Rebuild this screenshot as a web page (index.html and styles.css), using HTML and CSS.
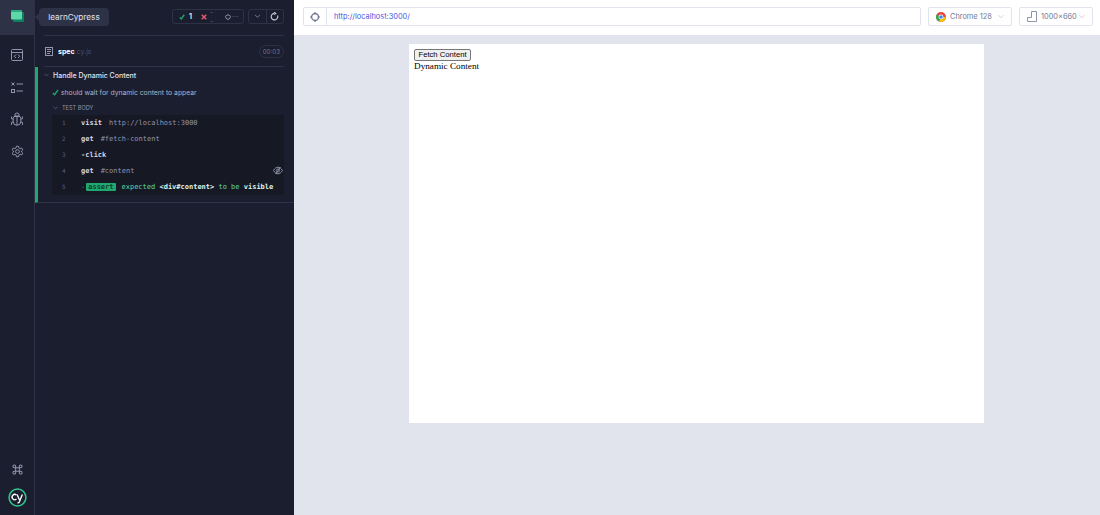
FILE: index.html
```html
<!DOCTYPE html>
<html lang="en">
<head>
<meta charset="utf-8">
<title>learnCypress</title>
<link rel="stylesheet" href="styles.css">
</head>
<body>
<div class="app">
  <nav class="nav">
    <div class="nav-active">
      <svg width="13" height="12" viewBox="0 0 13 12"><rect x="2" y="2" width="11" height="10" rx="1" fill="#0f7f63"/><rect x="0" y="0" width="11" height="9.500" rx="1" fill="#5fd8a8"/><rect x="0" y="0" width="11" height="2" fill="#2fa97f"/></svg>
    </div>
    <div class="tip">learnCypress</div>
    <ul class="nav-list">
      <li><svg width="12" height="12" viewBox="0 0 12 12" fill="none" stroke="#9095ad"><rect x=".5" y=".5" width="11" height="11" rx="1"/><path d="M.5 3.500h11M5 5.500L3.300 7.300 5 9M7 5.500l1.700 1.800L7 9"/></svg></li>
      <li><svg width="12" height="11" viewBox="0 0 12 11" fill="none" stroke="#9095ad"><path d="M.5.500l3 3M3.500.500l-3 3M5.500 2h6.500M5.500 9h6.500"/><rect x=".5" y="7.500" width="3" height="3"/></svg></li>
      <li><svg width="12" height="14" viewBox="0 0 12 14" fill="none" stroke="#9095ad"><path d="M4 3a2 2 0 0 1 4 0v1H4zM3 4.500h6l.8 2v3a3.800 3.800 0 0 1-7.600 0v-3zM6 4.500V13M2.200 7H.8L.3 4.500M9.800 7h1.400l.5-2.500M2.200 10H.8l-.5 3M9.800 10h1.400l.5 3"/></svg></li>
      <li><svg width="13" height="13" viewBox="0 0 16 16" fill="none" stroke="#9095ad" stroke-width="1.200"><path d="M6.700 1.500h2.600l.4 2 1.600.9 1.900-.7 1.300 2.300-1.500 1.300v1.400l1.500 1.300-1.300 2.300-1.900-.7-1.600.9-.4 2H6.700l-.4-2-1.600-.9-1.900.7L1.500 10l1.500-1.300V7.300L1.500 6l1.300-2.300 1.900.7 1.600-.9z"/><circle cx="8" cy="8" r="2.300"/></svg></li>
    </ul>
    <div class="nav-bottom">
      <svg width="11" height="11" viewBox="0 0 12 12" fill="none" stroke="#9095ad" stroke-width="1.100"><path d="M4 4h4v4H4zM4 4H2.500A1.500 1.500 0 1 1 4 2.500zM8 4V2.500A1.500 1.500 0 1 1 9.500 4zM8 8h1.500A1.500 1.500 0 1 1 8 9.500zM4 8v1.500A1.500 1.500 0 1 1 2.500 8z"/></svg>
      <svg width="19" height="19" viewBox="0 0 18 18" fill="none"><circle cx="9" cy="9" r="8" stroke="#2fc98f" stroke-width="1.400"/><path d="M8 6.700a2.500 2.500 0 1 0 0 3.800" stroke="#fff" stroke-width="1.300"/><path d="M8.600 6.200l2.200 5M13.600 6.200l-2.800 6.900c-.4.800-1 1.100-1.800 1" stroke="#fff" stroke-width="1.300"/></svg>
    </div>
  </nav>

  <section class="reporter">
    <header class="controls">
      <div class="stats">
        <svg width="6" height="6" viewBox="0 0 8 8" fill="none" stroke="#1fa971" stroke-width="1.800"><path d="M1 4.500l2 2L7 1"/></svg>
        <span class="num">1</span>
        <svg class="x" width="6" height="6" viewBox="0 0 8 8" fill="none" stroke="#e45770" stroke-width="2"><path d="M1 1l6 6M7 1L1 7"/></svg>
        <span class="dash d1">--</span>
        <svg class="o" width="6" height="6" viewBox="0 0 9 9" fill="none" stroke="#9095ad" stroke-width="1.500"><path d="M2.800 1.300a3.500 3.500 0 1 0 3.400 0M4.500 0v3"/></svg>
        <span class="dash d2">--</span>
      </div>
      <div class="btns">
        <span class="btn"><svg width="7" height="5" viewBox="0 0 8 6" fill="none" stroke="#747994" stroke-width="1.200"><path d="M1 1l3 3 3-3"/></svg></span>
        <span class="btn"><svg width="9" height="9" viewBox="0 0 11 11" fill="none" stroke="#c9cbd8" stroke-width="1.400"><path d="M5 1.700a4 4 0 1 0 4.200 2.500M5 .2l2 1.500-2 1.500"/></svg></span>
      </div>
    </header>
    <div class="spec">
      <svg width="8" height="9" viewBox="0 0 8 9" fill="none" stroke="#9095ad"><rect x=".5" y=".5" width="7" height="8"/><path d="M2 2.500h4M2 4.500h4M2 6.500h3"/></svg>
      <span class="spec-name">spec</span><span class="spec-ext">.cy.js</span>
      <span class="time">00:03</span>
    </div>
    <div class="suite">
      <div class="suite-title"><svg width="5" height="4" viewBox="0 0 6 4" fill="none" stroke="#5a5f7a"><path d="M.5.500L3 3 5.500.500"/></svg>Handle Dynamic Content</div>
      <div class="test-title"><svg width="7" height="7" viewBox="0 0 8 8" fill="none" stroke="#1fa971" stroke-width="1.500"><path d="M1 4.500l2 2L7 1"/></svg>should wait for dynamic content to appear</div>
      <div class="body-title"><svg width="5" height="4" viewBox="0 0 6 4" fill="none" stroke="#5a5f7a"><path d="M.5.500L3 3 5.500.500"/></svg>TEST BODY</div>
      <ol class="cmds">
        <li class="cmd"><span class="n">1</span><b>visit</b><span class="arg">http://localhost:3000</span></li>
        <li class="cmd"><span class="n">2</span><b>get</b><span class="arg">#fetch-content</span></li>
        <li class="cmd"><span class="n">3</span><b>-click</b></li>
        <li class="cmd"><span class="n">4</span><b>get</b><span class="arg">#content</span>
          <svg class="eye" width="10" height="9" viewBox="0 0 10 9" fill="none" stroke="#8b90a8"><path d="M.5 4.500C2 2 3.500 1.200 5 1.200S8 2 9.500 4.500C8 7 6.500 7.800 5 7.800S2 7 .5 4.500z"/><circle cx="5" cy="4.500" r="1.600"/><path d="M2.500 8L7.500 1"/></svg></li>
        <li class="cmd"><span class="n">5</span><i class="g">-</i><span class="tag">assert</span><span class="msg">expected <em>&lt;div#content&gt;</em> to be <em>visible</em></span></li>
      </ol>
    </div>
  </section>

  <main class="main">
    <div class="topbar">
      <div class="url">
        <span class="target"><svg width="10" height="10" viewBox="0 0 11 11" fill="none" stroke="#6d7290" stroke-width="1.300"><circle cx="5.500" cy="5.500" r="3.800"/><path d="M5.500 0v2.500M5.500 8.500V11M0 5.500h2.500M8.500 5.500H11"/></svg></span>
        <span class="url-text">http://localhost:3000/</span>
      </div>
      <div class="pill chrome">
        <svg width="10" height="10" viewBox="0 0 10 10"><circle cx="5" cy="5" r="5" fill="#e8453c"/><path d="M5 5L.7 2.500A5 5 0 0 0 3 9.600z" fill="#34a853"/><path d="M5 5h5a5 5 0 0 1-7 4.600z" fill="#fbbc05"/><circle cx="5" cy="5" r="2.400" fill="#fff"/><circle cx="5" cy="5" r="1.800" fill="#4285f4"/></svg>
        <span class="pill-text">Chrome 128</span>
        <svg width="6" height="5" viewBox="0 0 7 5" fill="none" stroke="#c5c8d6"><path d="M.5 1l3 3 3-3"/></svg>
      </div>
      <div class="pill size">
        <svg width="10" height="11" viewBox="0 0 10 11" fill="none" stroke="#8f94ad"><path d="M.5 10.500V6.500h4V.5h5v10z"/></svg>
        <span class="pill-text">1000x660</span>
        <svg width="6" height="5" viewBox="0 0 7 5" fill="none" stroke="#c5c8d6"><path d="M.5 1l3 3 3-3"/></svg>
      </div>
    </div>
    <div class="stage">
      <div class="aut">
        <button class="fetch" type="button">Fetch Content</button>
        <div class="dyn">Dynamic Content</div>
      </div>
    </div>
  </main>
</div>
</body>
</html>
```
FILE: styles.css
```css
* { box-sizing: border-box; }
html, body { margin: 0; height: 100%; overflow: hidden; }
body { font-family: "Liberation Sans", sans-serif; }
ul, ol { list-style: none; margin: 0; padding: 0; }
svg { display: block; flex: none; }

.app { display: flex; width: 1100px; height: 515px; }

/* left icon rail */
.nav { position: relative; width: 35px; background: #1b1e2e; border-right: 1px solid #2e3247; display: flex; flex-direction: column; }
.nav-active { height: 35px; background: #2e3247; display: flex; align-items: flex-start; justify-content: center; padding-top: 10px; }
.tip { position: absolute; left: 39px; top: 8px; width: 70px; height: 18px; background: #2e3247; border-radius: 4px; color: #e1e3ed; font: 8.200px/18px "Inter", sans-serif; text-align: center; z-index: 2; }
.tip::before { content: ""; position: absolute; left: -4px; top: 4px; border: 5px solid transparent; border-left: 0; border-right-color: #2e3247; }
.nav-list { display: flex; flex-direction: column; align-items: center; padding-top: 4px; }
.nav-list li { height: 32px; display: flex; align-items: center; }
.nav-bottom { margin-top: auto; display: flex; flex-direction: column; align-items: center; gap: 13px; padding-bottom: 8px; }

/* reporter */
.reporter { width: 259px; background: #1b1e2e; color: #e1e3ed; font-family: "Inter", sans-serif; }
.controls { margin: 0 10px 0 9px; height: 36px; border-bottom: 1px solid #2e3247; display: flex; justify-content: flex-end; align-items: flex-start; gap: 4px; padding-top: 9px; }
.stats { width: 72px; height: 15px; border: 1px solid #2e3247; border-radius: 3px; display: flex; align-items: center; padding-left: 6px; font-size: 7px; }
.num { color: #e1e3ed; font-weight: 700; margin-left: 4px; width: 4px; }
.x { margin-left: 8px; }
.d1 { margin-left: 3px; width: 6px; }
.o { margin-left: 9px; }
.d2 { margin-left: 1px; }
.dash { color: #5a5f7a; }
.btns { display: flex; width: 36px; height: 15px; border: 1px solid #2e3247; border-radius: 3px; }
.btn { flex: 1; display: flex; align-items: center; justify-content: center; }
.btn + .btn { border-left: 1px solid #2e3247; }

.spec { margin: 0 10px 0 9px; height: 31px; border-bottom: 1px solid #2e3247; display: flex; align-items: center; font-size: 7px; padding-left: 1px; }
.spec svg { margin-right: 5px; }
.spec-name { font-weight: 700; color: #fff; }
.spec-ext { color: #4a4f68; }
.time { margin-left: auto; border: 1px solid #2e3247; border-radius: 7px; height: 13px; line-height: 11px; padding: 0 3px; font-size: 6.200px; color: #747994; }

.suite { border-left: 3px solid #1fa971; height: 136px; border-bottom: 1px solid #2e3247; padding-right: 10px; }
.suite-title { height: 16px; display: flex; align-items: center; gap: 4px; padding-left: 6px; font-size: 7px; font-weight: 500; color: #e1e3ed; white-space: nowrap; }
.test-title { height: 18px; display: flex; align-items: center; gap: 2px; padding-left: 14px; font-size: 6.800px; color: #afb3c7; white-space: nowrap; }
.body-title { height: 14px; display: flex; align-items: center; gap: 4px; padding: 0 0 1px 15px; font-size: 5.600px; color: #9095ad; }
.cmds { margin-left: 14px; background: #161824; height: 80px; }
.cmd { position: relative; height: 16px; display: flex; align-items: center; font: 7px/16px "DejaVu Sans Mono", monospace; color: #e1e3ed; white-space: pre; }
.cmd .n { width: 29px; padding-left: 10px; font-size: 6px; color: #5a5f7a; flex: none; }
.cmd b { font-weight: 700; color: #d5d7e2; margin-right: 7px; }
.cmd i { font-style: normal; }
.arg { color: #9095ad; }
.g { color: #1fa971; margin-right: 1px; }
.tag { background: #1fa971; color: #0f3d2d; border-radius: 1px; padding: 0 2px; height: 8px; line-height: 8px; margin-right: 6px; font-weight: 700; }
.msg { color: #5fd8a8; }
.msg em { font-style: normal; font-weight: 700; color: #dff5ea; }
.eye { position: absolute; right: 1px; top: 3px; }

/* main */
.main { flex: 1; display: flex; flex-direction: column; background: #e1e3ed; }
.topbar { height: 35px; background: #fff; display: flex; align-items: flex-start; gap: 7px; padding: 7px 7px 0 9px; }
.url { flex: 1; height: 19px; border: 1px solid #e1e3ed; border-radius: 2px; display: flex; align-items: center; }
.target { width: 23px; height: 100%; border-right: 1px solid #e1e3ed; display: flex; align-items: center; justify-content: center; }
.url-text { padding-left: 7px; font: 7.400px "Inter", sans-serif; color: #4956e3; white-space: nowrap; }
.pill { height: 19px; border: 1px solid #e1e3ed; border-radius: 2px; display: flex; align-items: center; justify-content: space-between; padding: 0 7px; font: 7.400px "Inter", sans-serif; color: #747994; white-space: nowrap; }
.pill-text { flex: 1; padding-left: 4px; }
.chrome { width: 84px; }
.size { width: 74px; }
.stage { flex: 1; padding: 9px 116px 0 115px; }
.aut { background: #fff; width: 575px; height: 379px; padding: 5px; color: #000; font: 9.200px/10.500px "Liberation Serif", serif; }
.fetch { display: block; height: 12px; width: 57px; padding: 0; border: 1px solid #767676; border-radius: 2px; background: #efefef; color: #000; font: 7.670px/10px "Liberation Sans", sans-serif; white-space: nowrap; }
```
